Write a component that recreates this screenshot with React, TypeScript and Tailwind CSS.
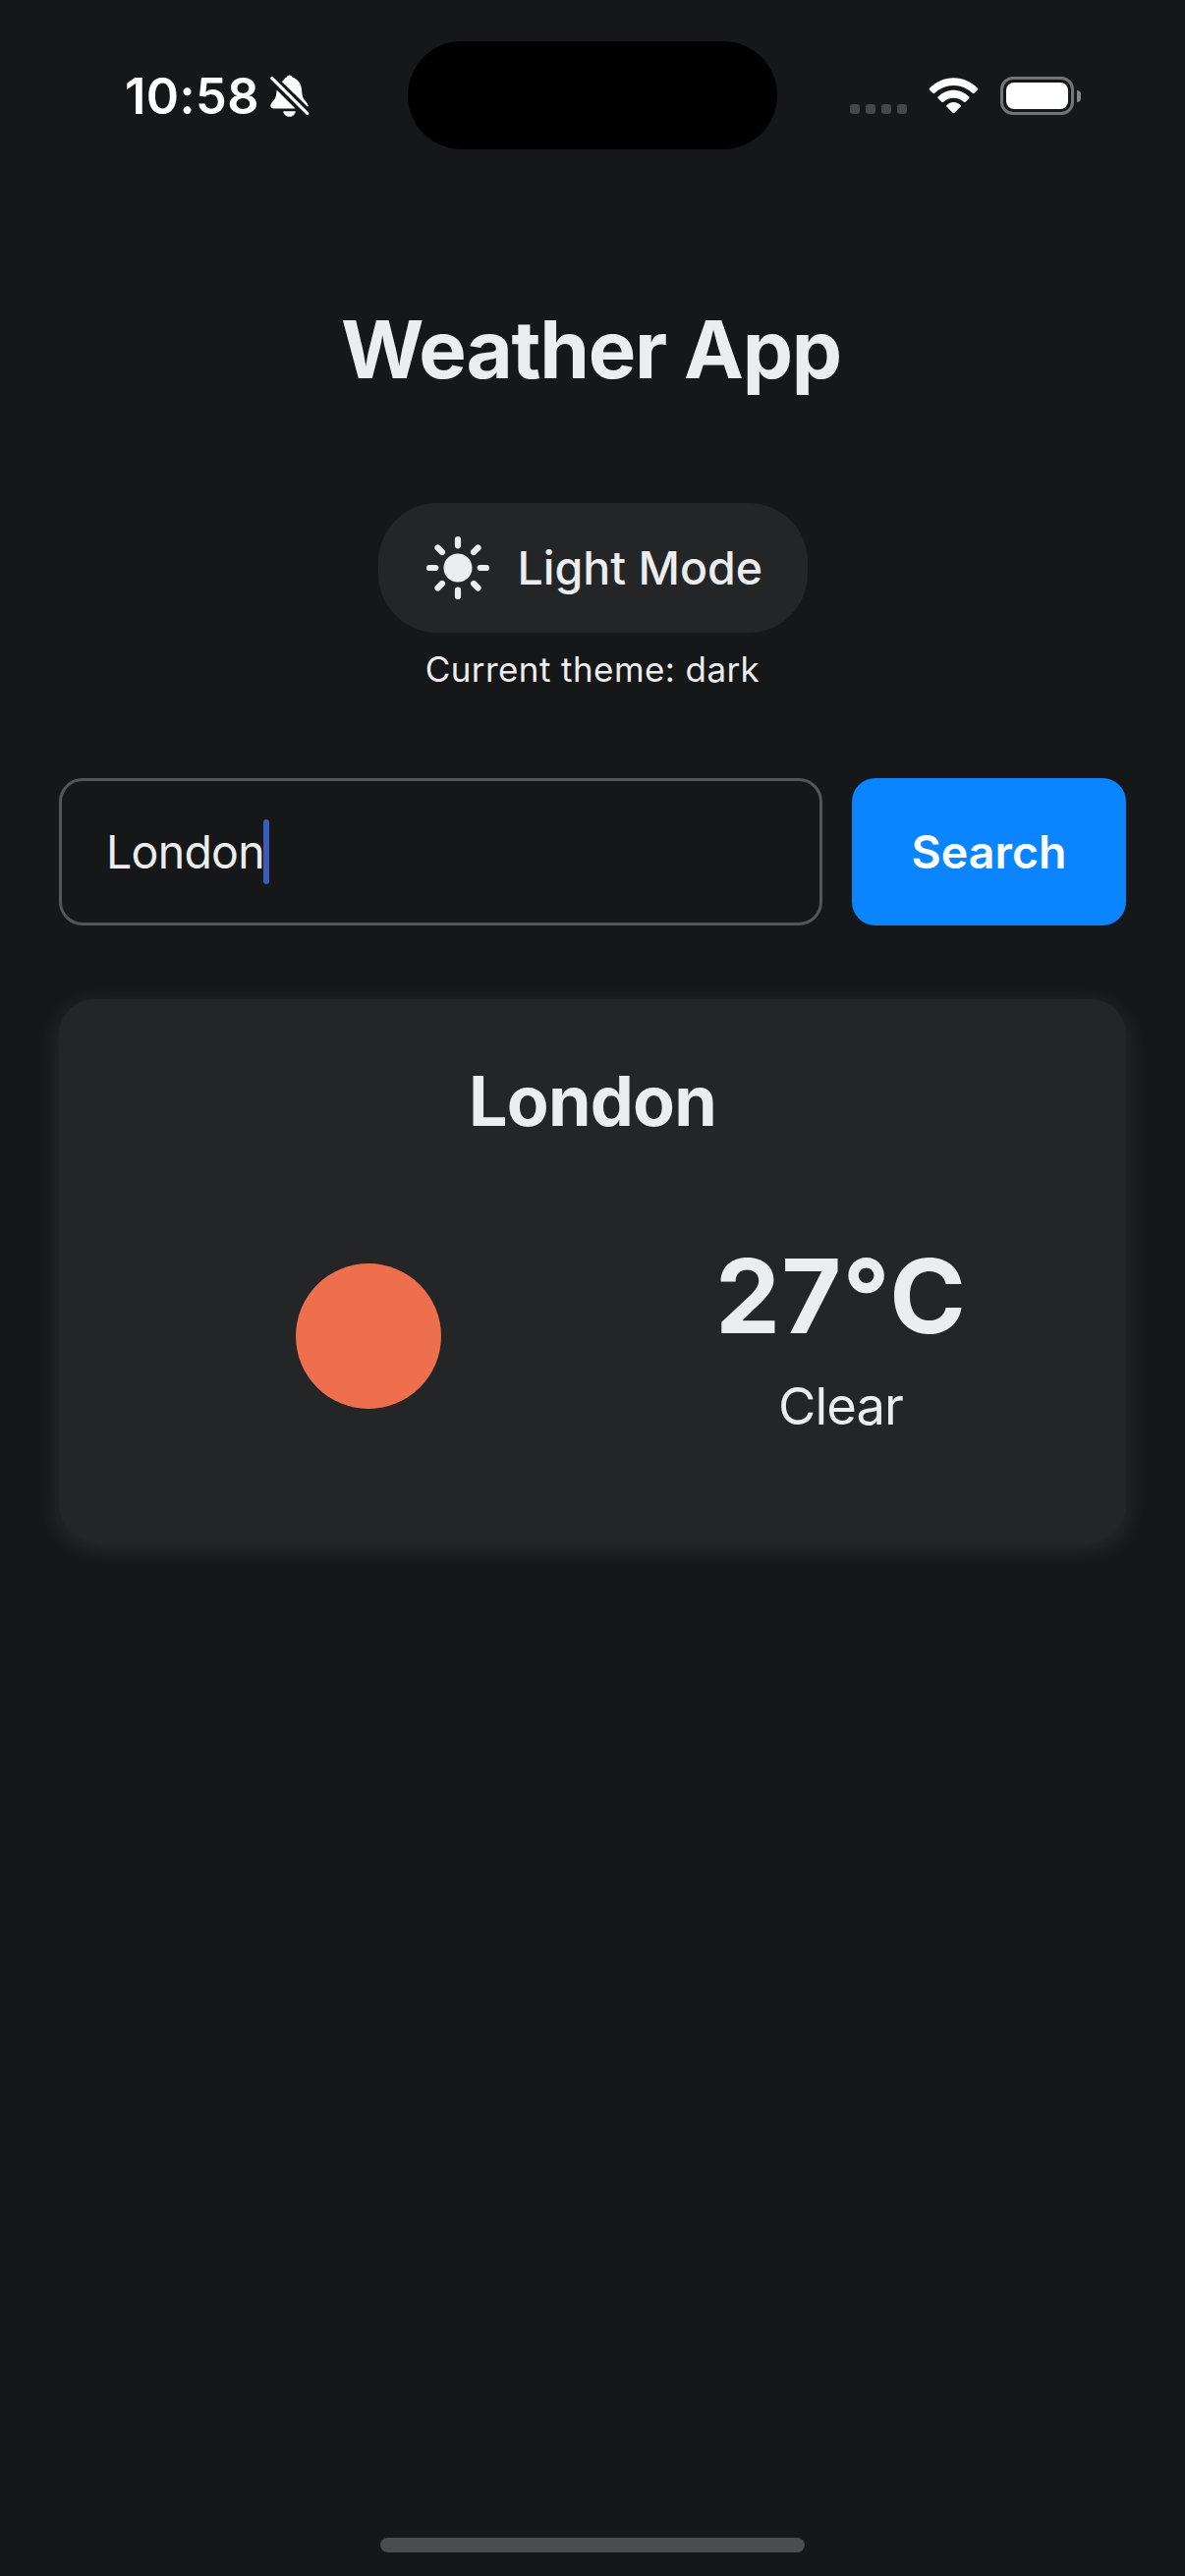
function BellOff() {
  return (
    <svg width="40" height="44" viewBox="0 0 40 44" fill="none" className="shrink-0">
      <path
        d="M13 6.5 C14 4.5 15.5 3.3 16.8 2.6 C17.2 1.2 18.3 0.4 19.6 0.4 C20.9 0.4 22 1.2 22.4 2.6 C28 4.5 31.5 9 32 15 C32.5 21 33 23.5 35.5 26.5 C37.5 28.8 38.6 30 38.6 31.4 C38.6 32 38.4 32.5 38 32.7 L11.5 6.8 Z"
        fill="white"
      />
      <path
        d="M6.6 15.5 L25.6 34.4 L3 34.4 C1.4 34.4 0.3 33.2 0.3 31.6 C0.3 29.6 2 28 3.6 26.2 C5.8 23.5 6.3 21 6.6 15.5 Z"
        fill="white"
      />
      <path d="M13.2 37.2 H25.8 C25.4 40.6 22.8 42.8 19.5 42.8 C16.2 42.8 13.6 40.6 13.2 37.2 Z" fill="white" />
      <path d="M2.2 4 L37.6 39.2" stroke="#151718" strokeWidth="7" />
      <path d="M1.9 3.7 L37.7 39.4" stroke="white" strokeWidth="3.3" strokeLinecap="round" />
    </svg>
  );
}

function Wifi() {
  return (
    <svg width="51" height="37" viewBox="0 0 52 38" fill="white" className="shrink-0">
      <path d="M1 11 C8 4 16.5 0.2 26 0.2 C35.500 0.2 44 4 51 11 C51.600 11.600 51.600 12.400 51 13 L47.600 16.300 C47 16.900 46.300 16.900 45.700 16.300 C40.300 11.200 33.500 8.300 26 8.300 C18.500 8.300 11.700 11.200 6.300 16.300 C5.700 16.900 5 16.900 4.400 16.300 L1 13 C0.400 12.400 0.400 11.600 1 11 Z" />
      <path d="M9.900 19.800 C14.300 15.500 19.900 13 26 13 C32.100 13 37.700 15.500 42.100 19.800 C42.700 20.400 42.700 21.100 42.100 21.700 L38.500 25.300 C37.900 25.900 37.200 25.900 36.600 25.400 C33.700 22.700 30 21.200 26 21.200 C22 21.200 18.300 22.700 15.400 25.400 C14.800 25.900 14.100 25.900 13.500 25.300 L9.900 21.700 C9.300 21.100 9.300 20.400 9.900 19.800 Z" />
      <path d="M18.900 28.700 C20.800 26.900 23.300 25.800 26 25.800 C28.700 25.800 31.200 26.900 33.100 28.700 C33.700 29.300 33.700 30 33.100 30.600 L27 36.800 C26.400 37.400 25.600 37.400 25 36.800 L18.900 30.600 C18.300 30 18.300 29.300 18.900 28.700 Z" />
    </svg>
  );
}

function Battery() {
  return (
    <div className="flex items-center gap-[3px]">
      <div className="h-[39px] w-[75px] rounded-[13px] border-[3px] border-[#737475] p-[3px]">
        <div className="h-full w-full rounded-[8px] bg-white" />
      </div>
      <div className="h-[12px] w-[4px] rounded-r-full bg-[#858687]" />
    </div>
  );
}

function StatusBar() {
  return (
    <header className="flex h-[195px] items-start">
      <div className="flex h-[195px] w-[415px] items-center pl-[127px]">
        <span className="w-[148px] text-[50.500px] leading-[60px] font-semibold tracking-[0.4px] whitespace-nowrap text-white">
          10:58
        </span>
        <BellOff />
      </div>
      <div className="mt-[42px] h-[110px] w-[376px] rounded-full bg-black" />
      <div className="flex h-[195px] flex-1 items-center pl-[74px]">
        <div className="mt-[27px] flex gap-[6px]">
          {[0, 1, 2, 3].map((i) => (
            <span key={i} className="size-[10px] rounded-[3px] bg-[#464749]" />
          ))}
        </div>
        <div className="ml-[22px]">
          <Wifi />
        </div>
        <div className="ml-[22px]">
          <Battery />
        </div>
      </div>
    </header>
  );
}

function Sun() {
  return (
    <svg width="66" height="66" viewBox="-33 -33 66 66" className="shrink-0">
      <circle r="14.5" fill="#ECEDEE" />
      {[0, 45, 90, 135, 180, 225, 270, 315].map((a) => (
        <path key={a} d="M0 -22.700 V-29" transform={`rotate(${a})`} stroke="#ECEDEE" strokeWidth="6.2" strokeLinecap="round" />
      ))}
    </svg>
  );
}

export default function App() {
  return (
    <div className="flex h-[2622px] w-[1206px] flex-col bg-[#151718] font-[Inter,sans-serif] text-[#ECEDEE]">
      <StatusBar />
      <main className="flex flex-1 flex-col px-[60px]">
        <h1 className="mt-[111px] pr-[3px] text-center text-[81.500px] leading-[100px] font-bold tracking-[-1.25px]">Weather App</h1>
        <div className="mt-[106px] flex flex-col items-center">
          <button className="flex h-[132px] w-[437px] items-center rounded-[60px] bg-[#232527] pl-[48px]">
            <Sun />
            <span className="ml-[28px] text-[46.500px] leading-[56px] font-medium whitespace-nowrap">Light Mode</span>
          </button>
          <p className="mt-[13px] text-[35px] leading-[48px] tracking-[0.42px]">Current theme: dark</p>
        </div>
        <div className="mt-[87px] flex gap-[30px]">
          <div className="flex h-[150px] w-[777px] items-center rounded-[24px] border-[3px] border-[#555555] pl-[45px]">
            <span className="text-[46.500px] leading-[56px] tracking-[-0.75px]">London</span>
            <span className="-ml-px h-[66px] w-[6px] rounded-full bg-[#3b5bbd]" />
          </div>
          <button className="h-[150px] w-[279px] rounded-[24px] bg-[#0a84ff] text-[46.500px] leading-[56px] font-semibold text-white">
            Search
          </button>
        </div>
        <section className="mt-[75px] flex h-[551px] flex-col rounded-[36px] bg-[#232527] pt-[61px] shadow-[0_6px_24px_rgba(255,255,255,0.1)]">
          <h2 className="text-center text-[70px] leading-[86px] font-bold tracking-[-0.8px]">London</h2>
          <div className="mt-[92px] flex">
            <div className="flex w-[629px] items-center pl-[241px]">
              <div className="size-[148px] rounded-full bg-[#ed6f4d]" />
            </div>
            <div className="flex w-[334px] flex-col items-center">
              <p className="text-[105px] leading-[126px] font-bold tracking-[1.2px]">27°C</p>
              <p className="mt-[17px] pr-[1px] text-[52.500px] leading-[64px] tracking-[-0.9px]">Clear</p>
            </div>
          </div>
        </section>
      </main>
      <div className="mx-auto mb-[24px] h-[15px] w-[432px] rounded-full bg-[#4b4c4d]" />
    </div>
  );
}
